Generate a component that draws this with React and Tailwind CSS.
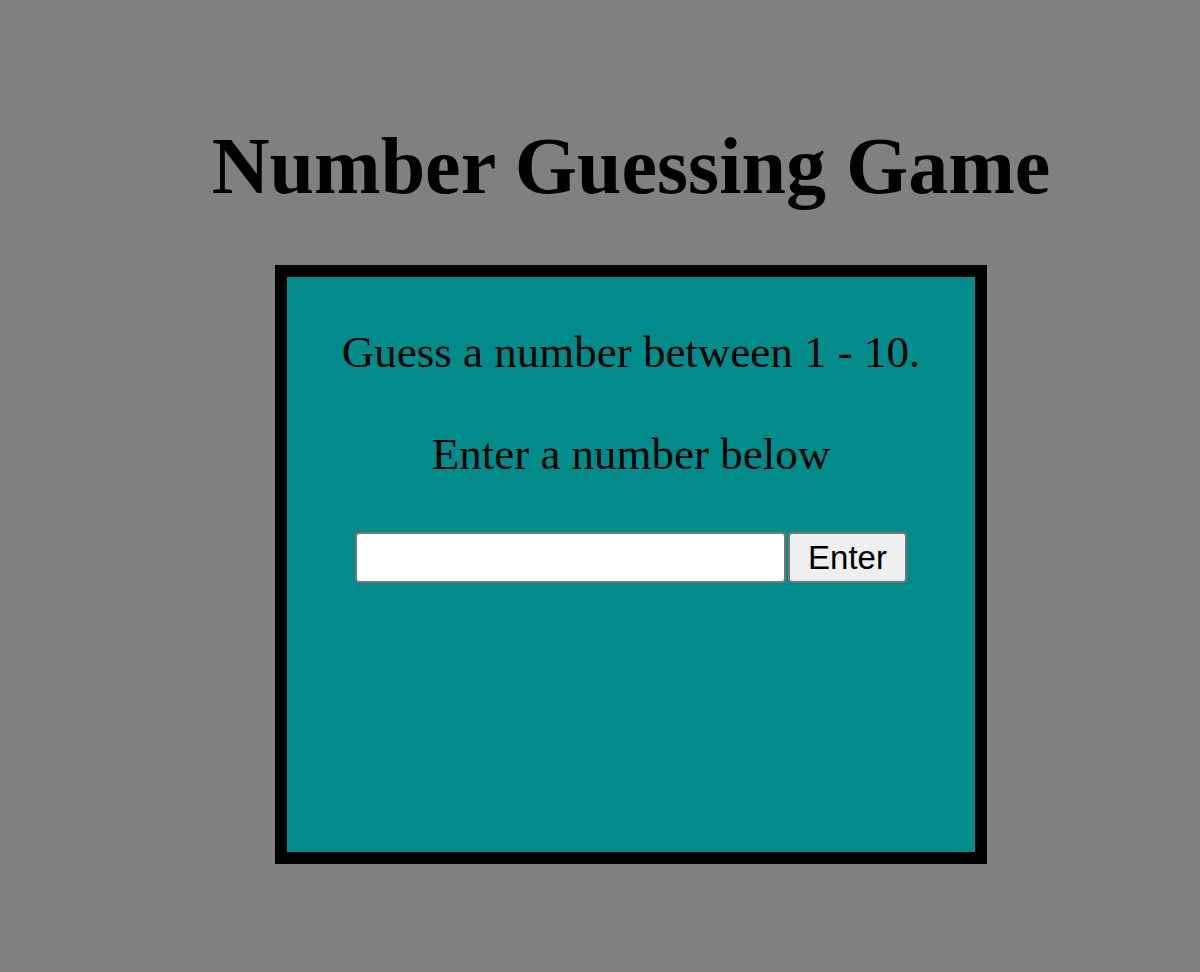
import React, { useState } from "react";

const App = () => {
  const [guess, setGuess] = useState("");

  return (
    <div className="min-h-screen w-full bg-[#808080] pl-[62px] font-['Liberation_Serif',_'Times_New_Roman',_serif] text-black">
      <div className="flex flex-col items-center">
        {/* Title */}
        <h1 className="mt-[122px] text-[80px] leading-[89px] font-bold">Number Guessing Game</h1>

        {/* Game box */}
        <div className="mt-[54px] box-border flex h-[599px] w-[712px] flex-col items-center border-[12px] border-black bg-[#008b8b]">
          <p className="mt-[49px] text-[45px] leading-[53px]">Guess a number between 1 - 10.</p>
          <p className="mt-[49px] text-[45px] leading-[53px]">Enter a number below</p>

          <div className="mt-[51px] flex items-center gap-[2px]">
            <input
              type="text"
              value={guess}
              onChange={(e) => setGuess(e.target.value)}
              className="box-border h-[51px] w-[431px] rounded-[4px] border-2 border-[#767676] bg-white px-2 text-[30px] outline-none"
            />
            <button className="box-border h-[51px] w-[119px] rounded-[4px] border-2 border-[#767676] bg-[#efefef] font-['Liberation_Sans',_Arial,_sans-serif] text-[33px] leading-none">
              Enter
            </button>
          </div>
        </div>
      </div>
    </div>
  );
};

export default App;
